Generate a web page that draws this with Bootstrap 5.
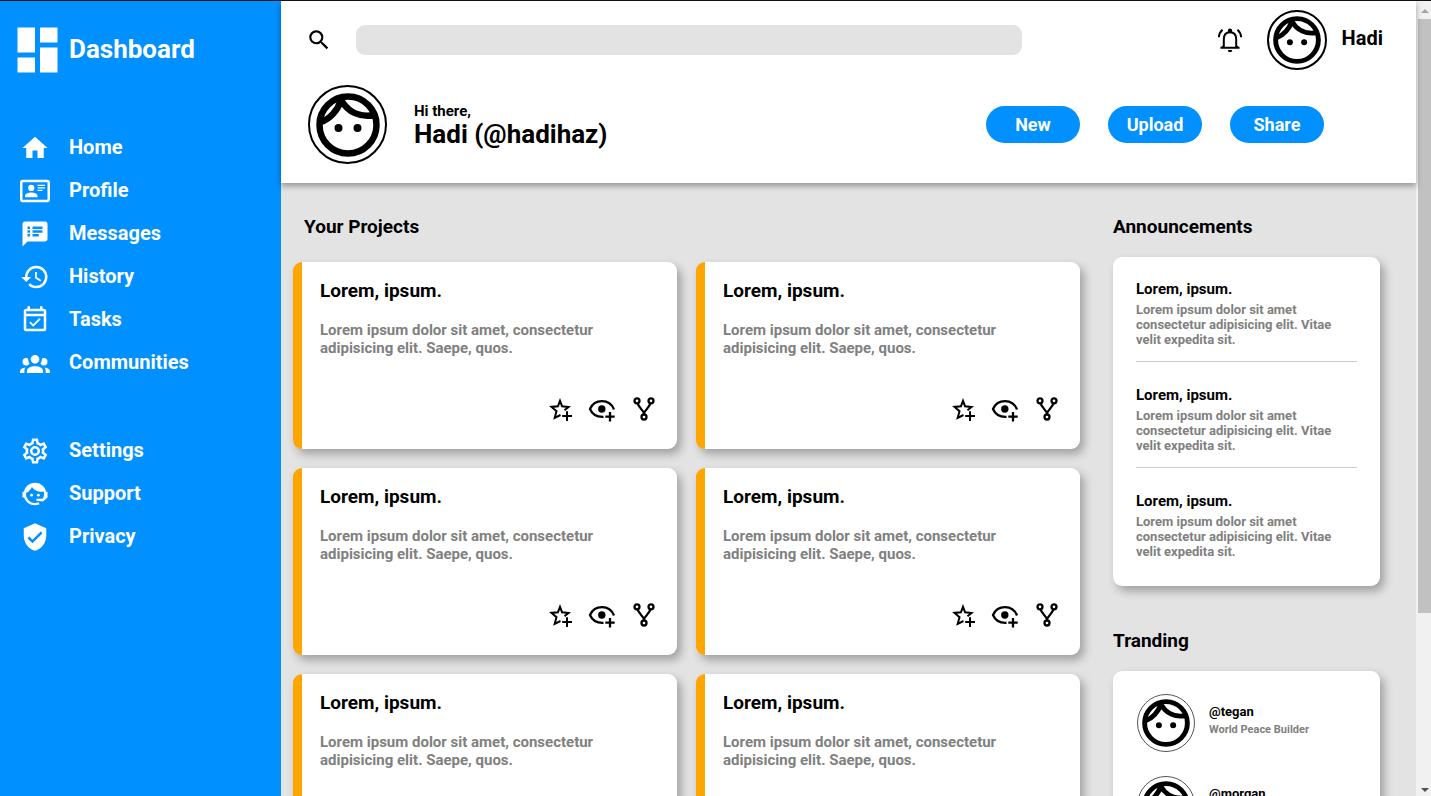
<!DOCTYPE html>
<html lang="en">
<head>
<meta charset="utf-8">
<meta name="viewport" content="width=device-width, initial-scale=1">
<title>Dashboard</title>
<link href="https://cdn.jsdelivr.net/npm/bootstrap@5.3.0/dist/css/bootstrap.min.css" rel="stylesheet">
<style>
:root { --blue: #0090ff; --page: #e3e3e3; --scroll-track: #f1f1f1; --scroll-thumb: #c1c1c1; }
body { font-family: Roboto, sans-serif; font-weight: 700; color: #000; background: var(--page); }
h1, h2, h3, p { margin: 0; font-weight: 700; line-height: inherit; }
svg { display: block; flex: none; fill: currentColor; }
.shell { height: 100vh; border-top: 1px solid #111; }
.side { width: 281px; background: var(--blue); color: #fff; padding: 26px 17px 0; }
.brand { gap: 11px; }
.side h1 { font-size: 26px; line-height: 44px; }
.side ul { padding: 0 0 0 3px; }
.side li { height: 43px; }
.side a { color: #fff; text-decoration: none; font-size: 20px; line-height: 28px; gap: 19px; }
.side .menu-main { margin-top: 60px; }
.side .menu-more { margin-top: 45px; }
.page-col { min-width: 0; }
.top { background: #fff; height: 182px; padding: 9px 33px 0 25px; box-shadow: 0 3px 6px rgba(0,0,0,.35); z-index: 1; }
.search { background: var(--page); border: 0; border-radius: 9px; height: 30px; width: 666px; min-width: 0; margin-left: 24px; padding: 0 12px; }
.ring { border: 2px solid #000; border-radius: 50%; background: #fff; flex: none; display: flex; align-items: center; justify-content: center; }
.ring-sm { width: 60px; height: 60px; margin: 0 15px 0 24px; }
.ring-lg { width: 79px; height: 79px; margin-right: 27px; }
.ring-thin { width: 58px; height: 58px; border: 1px solid #555; }
.user-name { font-size: 20px; line-height: 24px; padding-bottom: 4px; }
.hello { margin: 15px 59px 0 2px; }
.hello p { font-size: 15px; line-height: 18px; }
.hello h2 { font-size: 26px; line-height: 28px; }
.actions { gap: 28px; }
.pill { width: 94px; height: 37px; padding: 0; border: 0; border-radius: 19px; background: var(--blue); color: #fff; font-size: 18px; font-weight: 700; line-height: 37px; }
.pill:hover { background: #007ee0; color: #fff; }
.content-area { padding: 32px 36px 0 12px; gap: 33px; }
.heading { font-size: 19px; line-height: 24px; }
.heading-inset { padding-left: 11px; }
.projects { display: grid; grid-template-columns: 1fr 1fr; gap: 19px; margin-top: 23px; }
.tile { background: #fff; border-radius: 9px; box-shadow: 4px 5px 10px rgba(0,0,0,.3); }
.project { height: 187px; border-left: 9px solid orange; padding: 18px 19px 26px 18px; }
.project h3 { font-size: 19px; line-height: 22px; }
.project p { font-size: 15px; line-height: 18px; color: gray; margin-top: 19px; max-width: 300px; }
.tool { border: 0; padding: 0; background: none; color: #000; }
.tools { gap: 14px; }
.rail { width: 267px; flex: none; }
.news { margin-top: 18px; padding: 23px 23px 27px; }
.news article { padding-bottom: 14px; }
.news article + article { border-top: 1px solid #ccc; padding-top: 24px; }
.news article:last-child { padding-bottom: 0; }
.news h3 { font-size: 15px; line-height: 18px; }
.news p { font-size: 13px; line-height: 15px; color: gray; margin-top: 4px; }
.trend-heading { margin-top: 43px; }
.people { margin-top: 18px; padding: 23px 24px; }
.person { height: 82px; gap: 14px; }
.person-text { padding-top: 10px; }
.person h3 { font-size: 13px; line-height: 16px; }
.person p { font-size: 11px; line-height: 14px; color: gray; margin-top: 3px; }
.bar { width: 15px; flex: none; background: var(--scroll-track); }
.bar .thumb { width: 13px; background: var(--scroll-thumb); }
</style>
</head>
<body>
<svg class="d-none" aria-hidden="true">
  <symbol id="face" viewBox="0 0 64 64"><circle cx="32" cy="32" r="28.500" fill="none" stroke="#000" stroke-width="6.500"/><path d="M25 7C22 17 14 26 5 29M25 7C32 19 44 25 59 22M25 7L21 6" fill="none" stroke="#000" stroke-width="6.500"/><circle cx="22.500" cy="35" r="4"/><circle cx="41.500" cy="35" r="4"/></symbol>
  <symbol id="star" viewBox="0 0 28 28"><g fill="none" stroke="#000" stroke-width="2"><path d="M14.500 20L8.700 22.800 10.500 16.200 5.500 11.900 11.900 11.300 14 5.800 16.100 11.300 22.500 11.900 18.500 15.200"/><path d="M21 16.200V26M16.200 21H26"/></g></symbol>
  <symbol id="eye" viewBox="0 0 28 28"><g fill="none" stroke="#000" stroke-width="2.300"><path d="M26 14.500C24 9.500 19.500 6.200 14 6.200S4 9.500 2 14C4 18.800 8.500 22.200 15.500 21.900"/><path d="M22 17V26.400M17.300 21.700H26.700"/></g><circle cx="13.800" cy="14" r="3.700"/></symbol>
  <symbol id="fork" viewBox="0 0 28 24"><g fill="none" stroke="#000" stroke-width="2.300"><circle cx="7" cy="3.800" r="2.500"/><circle cx="21" cy="3.800" r="2.500"/><circle cx="14" cy="20" r="2.500"/><path d="M7.500 6.300C8.500 10 13 13.500 14 16V17.500M20.500 6.300C19.500 10 15 13.500 14 16"/></g></symbol>
</svg>
<div class="shell d-flex overflow-hidden">
  <nav class="side flex-shrink-0" aria-label="Main">
    <div class="brand d-flex">
      <svg width="41" height="46" viewBox="0 0 41 46"><path d="M.5.500h17.500v25H.5zM23 .500h17.500v15H23zM.5 30.500h17.500v15H.5zM23 20.500h17.500v25H23z"/></svg>
      <h1>Dashboard</h1>
    </div>
    <ul class="menu-main list-unstyled mb-0">
      <li><a href="#" class="d-flex"><svg width="30" height="30" viewBox="0 0 24 24"><path d="M10,20V14H14V20H19V12H22L12,3L2,12H5V20H10Z"/></svg>Home</a></li>
      <li><a href="#" class="d-flex"><svg width="30" height="30" viewBox="0 0 24 24"><path fill-rule="evenodd" d="M22,3H2C.91,3.040 .04,3.910 0,5V19C.04,20.090 .91,20.960 2,21H22C23.090,20.960 23.960,20.090 24,19V5C23.960,3.910 23.090,3.040 22,3M22,19H2V5H22V19M14,17V15.750C14,14.090 10.660,13.250 9,13.250C7.340,13.250 4,14.090 4,15.750V17H14M9,7A2.500,2.500 0 0,0 6.500,9.500A2.500,2.500 0 0,0 9,12A2.500,2.500 0 0,0 11.500,9.500A2.500,2.500 0 0,0 9,7M14,7V8H20V7H14M14,9V10H20V9H14M14,11V12H18V11H14"/></svg>Profile</a></li>
      <li><a href="#" class="d-flex"><svg width="30" height="30" viewBox="0 0 24 24"><path d="M20 2H4c-1.100 0-1.990.9-1.990 2L2 22l4-4h14c1.100 0 2-.9 2-2V4c0-1.100-.9-2-2-2zM8 14H6v-2h2v2zm0-3H6V9h2v2zm0-3H6V6h2v2zm7 6h-5v-2h5v2zm3-3h-8V9h8v2zm0-3h-8V6h8v2z"/></svg>Messages</a></li>
      <li><a href="#" class="d-flex"><svg width="30" height="30" viewBox="0 0 24 24"><path d="M13.500,8H12V13L16.280,15.540L17,14.330L13.500,12.250V8M13,3A9,9 0 0,0 4,12H1L4.960,16.030L9,12H6A7,7 0 0,1 13,5A7,7 0 0,1 20,12A7,7 0 0,1 13,19C11.070,19 9.320,18.210 8.060,16.940L6.640,18.360C8.270,20 10.500,21 13,21A9,9 0 0,0 22,12A9,9 0 0,0 13,3"/></svg>History</a></li>
      <li><a href="#" class="d-flex"><svg width="30" height="30" viewBox="0 0 24 24"><path fill-rule="evenodd" d="M19 3H18V1H16V3H8V1H6V3H5A2 2 0 0 0 3 5V19A2 2 0 0 0 5 21H19A2 2 0 0 0 21 19V5A2 2 0 0 0 19 3M19 19H5V9H19V19M19 7H5V5H19V7M10.560,17.460L16.500,11.530L15.430,10.470L10.560,15.340L8.450,13.230L7.390,14.290Z"/></svg>Tasks</a></li>
      <li><a href="#" class="d-flex"><svg width="30" height="30" viewBox="0 0 24 24"><path d="M12,5.500A3.500,3.500 0 0,1 15.500,9A3.500,3.500 0 0,1 12,12.500A3.500,3.500 0 0,1 8.500,9A3.500,3.500 0 0,1 12,5.500M5,8C5.560,8 6.080,8.150 6.530,8.420C6.380,9.850 6.800,11.270 7.660,12.380C7.160,13.340 6.160,14 5,14A3,3 0 0,1 2,11A3,3 0 0,1 5,8M19,8A3,3 0 0,1 22,11A3,3 0 0,1 19,14C17.840,14 16.840,13.340 16.340,12.380C17.200,11.270 17.620,9.850 17.470,8.420C17.920,8.150 18.440,8 19,8M5.500,18.250C5.500,16.180 8.410,14.500 12,14.500C15.590,14.500 18.500,16.180 18.500,18.250V20H5.500V18.250M0,20V18.500C0,17.110 1.890,15.940 4.450,15.600C3.860,16.280 3.500,17.220 3.500,18.250V20H0M24,20H20.500V18.250C20.500,17.220 20.140,16.280 19.550,15.600C22.110,15.940 24,17.110 24,18.500V20Z"/></svg>Communities</a></li>
    </ul>
    <ul class="menu-more list-unstyled mb-0">
      <li><a href="#" class="d-flex"><svg width="30" height="30" viewBox="0 0 24 24"><path d="M12,8A4,4 0 0,1 16,12A4,4 0 0,1 12,16A4,4 0 0,1 8,12A4,4 0 0,1 12,8M12,10A2,2 0 0,0 10,12A2,2 0 0,0 12,14A2,2 0 0,0 14,12A2,2 0 0,0 12,10M10,22C9.750,22 9.540,21.820 9.500,21.580L9.130,18.930C8.500,18.680 7.960,18.340 7.440,17.940L4.950,18.950C4.730,19.030 4.460,18.950 4.340,18.730L2.340,15.270C2.210,15.050 2.270,14.780 2.460,14.630L4.570,12.970L4.500,12L4.570,11L2.460,9.370C2.270,9.220 2.210,8.950 2.340,8.730L4.340,5.270C4.460,5.050 4.730,4.960 4.950,5.050L7.440,6.050C7.960,5.660 8.500,5.320 9.130,5.070L9.500,2.420C9.540,2.180 9.750,2 10,2H14C14.250,2 14.460,2.180 14.500,2.420L14.870,5.070C15.500,5.320 16.040,5.660 16.560,6.050L19.050,5.050C19.270,4.960 19.540,5.050 19.660,5.270L21.660,8.730C21.790,8.950 21.730,9.220 21.540,9.370L19.430,11L19.500,12L19.430,13L21.540,14.630C21.730,14.780 21.790,15.050 21.660,15.270L19.660,18.730C19.540,18.950 19.270,19.040 19.050,18.950L16.560,17.950C16.040,18.340 15.500,18.680 14.870,18.930L14.500,21.580C14.460,21.820 14.250,22 14,22H10M11.250,4L10.880,6.610C9.680,6.860 8.620,7.500 7.850,8.390L5.440,7.350L4.690,8.650L6.800,10.200C6.400,11.370 6.400,12.640 6.800,13.800L4.680,15.360L5.430,16.660L7.860,15.620C8.630,16.500 9.680,17.140 10.870,17.380L11.240,20H12.760L13.130,17.390C14.320,17.140 15.370,16.500 16.140,15.620L18.570,16.660L19.320,15.360L17.200,13.810C17.600,12.640 17.600,11.370 17.200,10.200L19.310,8.650L18.560,7.350L16.150,8.390C15.380,7.500 14.320,6.860 13.120,6.620L12.750,4H11.250Z"/></svg>Settings</a></li>
      <li><a href="#" class="d-flex"><svg width="30" height="30" viewBox="0 0 24 24"><path d="M18.720,14.760C19.070,13.910 19.260,13 19.260,12C19.260,11.280 19.150,10.590 18.960,9.950C18.310,10.100 17.630,10.180 16.920,10.180C13.860,10.180 11.150,8.670 9.500,6.340C8.610,8.500 6.910,10.260 4.770,11.220C4.730,11.470 4.730,11.740 4.730,12A7.270,7.270 0 0,0 12,19.270C13.050,19.270 14.060,19.040 14.970,18.630C15.540,19.720 15.800,20.260 15.780,20.260C14.140,20.810 12.870,21.080 12,21.080C9.580,21.080 7.270,20.130 5.570,18.420C4.530,17.380 3.760,16.110 3.330,14.730H2V10.180H3.090C3.930,6.040 7.600,2.920 12,2.920C14.400,2.920 16.710,3.870 18.420,5.580C19.690,6.840 20.540,8.450 20.890,10.180H22V14.730H21.940L18.380,18L13.080,17.400V15.730H17.910L18.720,14.760"/><circle cx="9.270" cy="12.900" r="1.140"/><circle cx="14.720" cy="12.900" r="1.140"/></svg>Support</a></li>
      <li><a href="#" class="d-flex"><svg width="30" height="30" viewBox="0 0 24 24"><path fill-rule="evenodd" d="M10,17L6,13L7.410,11.590L10,14.170L16.590,7.580L18,9M12,1L3,5V11C3,16.550 6.840,21.740 12,23C17.160,21.740 21,16.550 21,11V5L12,1Z"/></svg>Privacy</a></li>
    </ul>
  </nav>
  <div class="page-col flex-grow-1 d-flex flex-column">
    <header class="top position-relative flex-shrink-0">
      <div class="d-flex align-items-center">
        <label for="search"><svg width="26" height="26" viewBox="0 0 24 24"><path fill-rule="evenodd" d="M9.500,3A6.500,6.500 0 0,1 16,9.500C16,11.110 15.410,12.590 14.440,13.730L14.710,14H15.500L20.500,19L19,20.500L14,15.500V14.710L13.730,14.440C12.590,15.410 11.110,16 9.500,16A6.500,6.500 0 0,1 3,9.500A6.500,6.500 0 0,1 9.500,3M9.500,5C7,5 5,7 5,9.500C5,12 7,14 9.500,14C12,14 14,12 14,9.500C14,7 12,5 9.500,5Z"/></svg></label>
        <input id="search" type="search" class="search" aria-label="Search">
        <div class="d-flex align-items-center ms-auto">
          <button class="tool" type="button" aria-label="Notifications"><svg width="26" height="26" viewBox="0 0 26 26"><g fill="none" stroke="#000" stroke-width="2"><path d="M3.500 20.700H22.500M6.800 20V12.500C6.800 8 9.200 5.200 13 5.200S19.200 8 19.200 12.500V20M5.500 2.800C3.300 4.800 2 7 1.900 10.200M20.500 2.800C22.700 4.800 24 7 24.100 10.200"/></g><circle cx="13" cy="3.800" r="2.200"/><path d="M10.800 23h4.400a2.200 2.200 0 0 1-4.400 0M3.500 20.700l3.300-3v3zM22.500 20.700l-3.300-3v3z"/></svg></button>
          <span class="ring ring-sm"><svg width="48" height="48"><use href="#face"/></svg></span>
          <span class="user-name">Hadi</span>
        </div>
      </div>
      <div class="hello d-flex align-items-center">
        <span class="ring ring-lg"><svg width="64" height="64"><use href="#face"/></svg></span>
        <div>
          <p>Hi there,</p>
          <h2>Hadi (@hadihaz)</h2>
        </div>
        <div class="actions d-flex ms-auto">
          <button class="btn pill" type="button">New</button>
          <button class="btn pill" type="button">Upload</button>
          <button class="btn pill" type="button">Share</button>
        </div>
      </div>
    </header>
    <main class="content-area d-flex">
      <section class="flex-grow-1">
        <h2 class="heading heading-inset">Your Projects</h2>
        <div class="projects" id="projects"></div>
      </section>
      <aside class="rail">
        <h2 class="heading">Announcements</h2>
        <div class="tile news">
          <article><h3>Lorem, ipsum.</h3><p>Lorem ipsum dolor sit amet consectetur adipisicing elit. Vitae velit expedita sit.</p></article>
          <article><h3>Lorem, ipsum.</h3><p>Lorem ipsum dolor sit amet consectetur adipisicing elit. Vitae velit expedita sit.</p></article>
          <article><h3>Lorem, ipsum.</h3><p>Lorem ipsum dolor sit amet consectetur adipisicing elit. Vitae velit expedita sit.</p></article>
        </div>
        <h2 class="heading trend-heading">Tranding</h2>
        <div class="tile people">
          <div class="person d-flex"><span class="ring ring-thin"><svg width="48" height="48"><use href="#face"/></svg></span><div class="person-text"><h3>@tegan</h3><p>World Peace Builder</p></div></div>
          <div class="person d-flex"><span class="ring ring-thin"><svg width="48" height="48"><use href="#face"/></svg></span><div class="person-text"><h3>@morgan</h3></div></div>
        </div>
      </aside>
    </main>
  </div>
  <div class="bar d-flex flex-column align-items-end" aria-hidden="true">
    <svg width="13" height="18" viewBox="0 0 13 18"><path d="M3 12h8L7 8z" fill="#a3a3a3"/></svg>
    <div class="thumb flex-shrink-0" style="height:74.7%"></div>
    <svg class="mt-auto" width="13" height="14" viewBox="0 0 13 14"><path d="M3 6h8L7 10z" fill="#505050"/></svg>
  </div>
</div>
<script>
const project = `<article class="tile project d-flex flex-column">
  <h3>Lorem, ipsum.</h3>
  <p>Lorem ipsum dolor sit amet, consectetur adipisicing elit. Saepe, quos.</p>
  <div class="tools d-flex justify-content-end align-items-center mt-auto">
    <button class="tool" type="button" aria-label="Star"><svg width="28" height="28"><use href="#star"/></svg></button>
    <button class="tool" type="button" aria-label="Watch"><svg width="28" height="28"><use href="#eye"/></svg></button>
    <button class="tool" type="button" aria-label="Fork"><svg width="28" height="24"><use href="#fork"/></svg></button>
  </div>
</article>`;
document.getElementById('projects').innerHTML = project.repeat(6);
</script>
<script src="https://cdn.jsdelivr.net/npm/bootstrap@5.3.0/dist/js/bootstrap.bundle.min.js"></script>
</body>
</html>
